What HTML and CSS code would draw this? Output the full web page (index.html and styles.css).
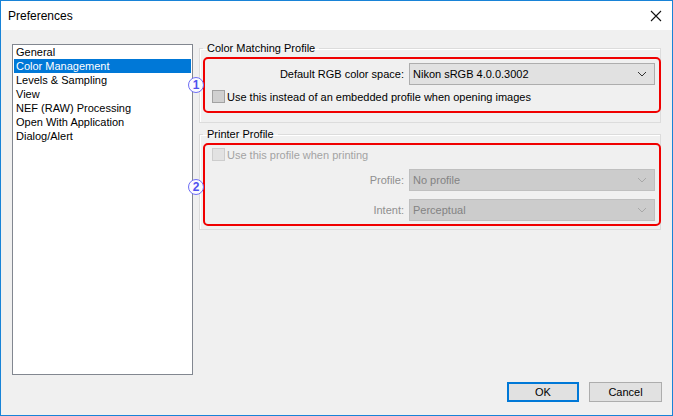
FILE: index.html
```html
<!DOCTYPE html>
<html lang="en">
<head>
    <meta charset="UTF-8">
    <title>Preferences</title>
    <link rel="stylesheet" href="styles.css">
</head>
<body>
    <div class="window">
        <div class="titlebar">
            <span class="title">Preferences</span>
            <span class="close">
                <svg width="12" height="12" viewBox="0 0 12 12"><path d="M1 1L11 11M11 1L1 11" stroke="#111" stroke-width="1.1" fill="none"/></svg>
            </span>
        </div>

        <div class="body">
            <div class="main">
                <ul class="nav-list">
                    <li>General</li>
                    <li class="selected">Color Management</li>
                    <li>Levels &amp; Sampling</li>
                    <li>View</li>
                    <li>NEF (RAW) Processing</li>
                    <li>Open With Application</li>
                    <li>Dialog/Alert</li>
                </ul>

                <div class="panel">
                    <fieldset class="group">
                        <legend>Color Matching Profile</legend>
                        <div class="mark mark-one">
                            <span class="badge">1</span>
                            <div class="field-row">
                                <span class="field-label">Default RGB color space:</span>
                                <div class="dropdown">
                                    <span>Nikon sRGB 4.0.0.3002</span>
                                    <svg width="10" height="6" viewBox="0 0 10 6"><path d="M1 1L5 5L9 1" stroke="#333" stroke-width="1" fill="none"/></svg>
                                </div>
                            </div>
                            <label class="check-row">
                                <span class="checkbox"></span>
                                Use this instead of an embedded profile when opening images
                            </label>
                        </div>
                    </fieldset>

                    <fieldset class="group group-printer">
                        <legend>Printer Profile</legend>
                        <div class="mark mark-two">
                            <span class="badge">2</span>
                            <label class="check-row disabled">
                                <span class="checkbox"></span>
                                Use this profile when printing
                            </label>
                            <div class="field-row disabled">
                                <span class="field-label">Profile:</span>
                                <div class="dropdown">
                                    <span>No profile</span>
                                    <svg width="10" height="6" viewBox="0 0 10 6"><path d="M1 1L5 5L9 1" stroke="#a8a8a8" stroke-width="1" fill="none"/></svg>
                                </div>
                            </div>
                            <div class="field-row disabled">
                                <span class="field-label">Intent:</span>
                                <div class="dropdown">
                                    <span>Perceptual</span>
                                    <svg width="10" height="6" viewBox="0 0 10 6"><path d="M1 1L5 5L9 1" stroke="#a8a8a8" stroke-width="1" fill="none"/></svg>
                                </div>
                            </div>
                        </div>
                    </fieldset>
                </div>
            </div>

            <div class="footer">
                <button class="btn btn-default">OK</button>
                <button class="btn">Cancel</button>
            </div>
        </div>
    </div>
</body>
</html>
```

FILE: styles.css
```css
html, body {
    margin: 0;
    padding: 0;
    background-color: #f0f0f0;
}
body {
    font-family: "Liberation Sans", Arial, sans-serif;
    font-size: 11px;
    color: #000;
}
.window {
    width: 673px;
    height: 416px;
    box-sizing: border-box;
    border: 1px solid #1883d7;
    background-color: #f0f0f0;
}
.titlebar {
    height: 29px;
    background-color: #fff;
    display: flex;
    align-items: center;
    justify-content: space-between;
    padding: 0 10px 0 7px;
}
.title {
    font-size: 12px;
}
.close {
    display: flex;
    align-items: center;
}
.body {
    padding: 14px 0 0 11px;
}
.main {
    display: flex;
    gap: 6px;
}
.nav-list {
    list-style: none;
    margin: 0;
    padding: 0 1px;
    width: 177px;
    height: 329px;
    background-color: #fff;
    border: 1px solid #828790;
}
.nav-list li {
    height: 14px;
    line-height: 14px;
    padding-left: 2px;
    white-space: nowrap;
}
.nav-list li.selected {
    background-color: #0078d7;
    color: #fff;
}
.panel {
    width: 462px;
    margin-top: -3px;
}
.group {
    margin: 0;
    padding: 2px 0 9px 3px;
    min-width: 0;
    border: 1px solid #dcdcdc;
    box-shadow: inset 1px 1px 0 #fff;
}
.group legend {
    padding: 0 4px;
    line-height: 14px;
}
.group-printer {
    margin-top: 4px;
    padding-bottom: 3px;
}
.mark {
    position: relative;
    margin-right: -1px;
    border: 2px solid #f00000;
    border-radius: 5px;
    display: flex;
    flex-direction: column;
}
.mark-one {
    padding: 4px 4px 0 7px;
    height: 48px;
}
.mark-two {
    padding: 3px 4px 0 7px;
    height: 76px;
}
.badge {
    position: absolute;
    left: -17px;
    top: 50%;
    transform: translateY(-50%);
    width: 14px;
    height: 14px;
    border: 1px solid #6f6ff5;
    border-radius: 50%;
    background-color: #fbfbff;
    color: #5050ee;
    font-size: 12px;
    font-weight: bold;
    line-height: 14px;
    text-align: center;
}
.mark-two .badge {
    margin-top: 2px;
}
.field-row {
    display: flex;
    align-items: center;
}
.field-label {
    flex: 1;
    text-align: right;
    margin-right: 5px;
}
.dropdown {
    width: 246px;
    height: 22px;
    border: 1px solid #adadad;
    background-color: #e1e1e1;
    display: flex;
    align-items: center;
    justify-content: space-between;
    padding: 0 7px 0 3px;
    box-sizing: border-box;
}
.check-row {
    display: flex;
    align-items: center;
    height: 13px;
    margin-top: 5px;
    white-space: nowrap;
}
.checkbox {
    width: 11px;
    height: 11px;
    border: 1px solid #a2a2a2;
    background-color: #d0d0d0;
    margin-right: 2px;
}
.mark-two .check-row {
    margin-top: 0;
}
.mark-two .field-row {
    margin-top: 8px;
}
.disabled {
    color: #a3a3a3;
}
.disabled .checkbox {
    border-color: #cdcdcd;
    background-color: #e2e2e2;
}
.field-row.disabled .field-label {
    color: #8f8f8f;
}
.disabled .dropdown {
    background-color: #cccccc;
    border-color: #bfbfbf;
    color: #838383;
}
.footer {
    display: flex;
    justify-content: flex-end;
    gap: 10px;
    margin-top: 7px;
    padding-right: 10px;
}
.btn {
    font-family: "Liberation Sans", Arial, sans-serif;
    font-size: 11px;
    color: #000;
    width: 73px;
    height: 20px;
    padding: 0;
    border: 1px solid #adadad;
    background-color: #e1e1e1;
}
.btn-default {
    width: 72px;
    border: 2px solid #0078d7;
}
```
